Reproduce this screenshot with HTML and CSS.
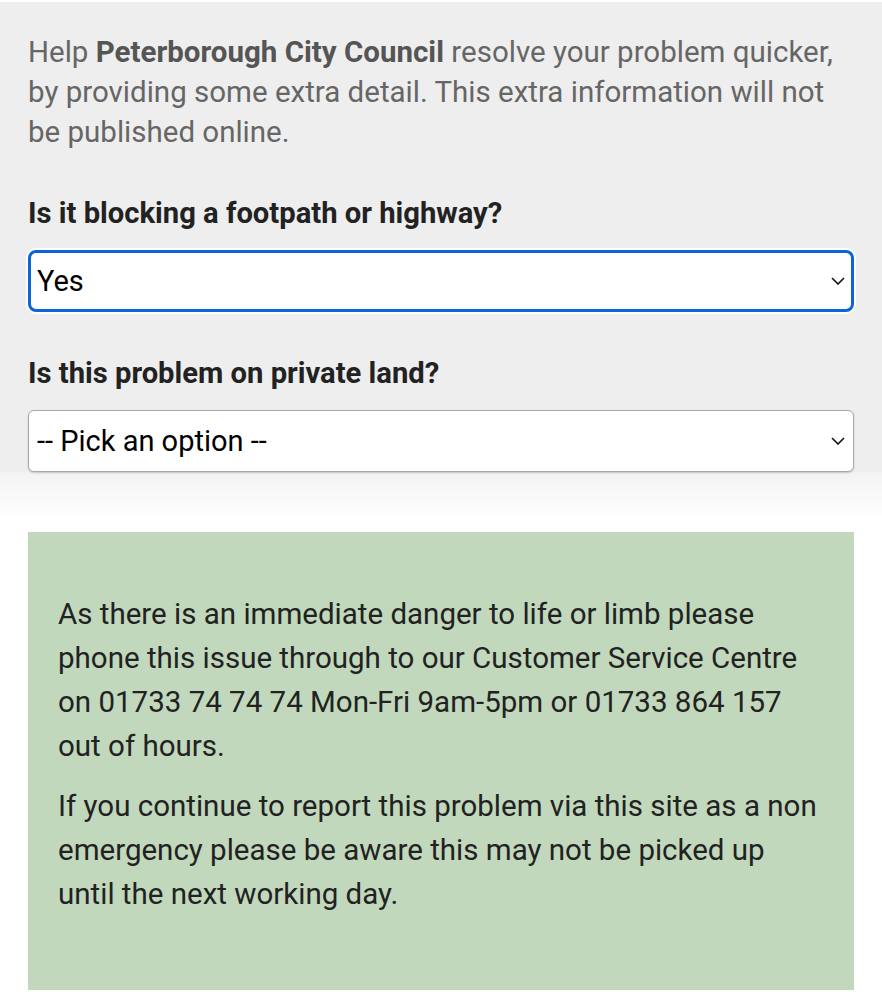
FILE: index.html
```html
<!DOCTYPE html>
<html lang="en">
<head>
  <meta charset="UTF-8">
  <meta name="viewport" content="width=device-width, initial-scale=1.0">
  <title>Extra details</title>
  <link rel="stylesheet" href="styles.css">
</head>
<body>
  <div class="extra">
    <p class="intro">Help <strong>Peterborough City Council</strong> resolve your problem quicker, by providing some extra detail. This extra information will not be published online.</p>

    <label class="question" for="blocking">Is it blocking a footpath or highway?</label>
    <div class="select-wrap">
      <select id="blocking" class="focused">
        <option>Yes</option>
        <option>No</option>
      </select>
      <svg class="chevron" viewBox="0 0 14 8"><path d="M1 1l6 6 6-6" fill="none" stroke="#111" stroke-width="1.6"/></svg>
    </div>

    <label class="question" for="private">Is this problem on private land?</label>
    <div class="select-wrap">
      <select id="private">
        <option>-- Pick an option --</option>
        <option>Yes</option>
        <option>No</option>
      </select>
      <svg class="chevron" viewBox="0 0 14 8"><path d="M1 1l6 6 6-6" fill="none" stroke="#111" stroke-width="1.6"/></svg>
    </div>
  </div>

  <div class="fade"></div>

  <div class="notice">
    <p>As there is an immediate danger to life or limb please phone this issue through to our Customer Service Centre on 01733 74 74 74 Mon-Fri 9am-5pm or 01733 864 157 out of hours.</p>
    <p>If you continue to report this problem via this site as a non emergency please be aware this may not be picked up until the next working day.</p>
  </div>
</body>
</html>
```

FILE: styles.css
```css
* {
  margin: 0;
  padding: 0;
  box-sizing: border-box;
}

body {
  font-family: Roboto, 'Liberation Sans', sans-serif;
  background: #fff;
  color: #222;
}

.extra {
  margin-top: 2px;
  background: #eeeeee;
  padding: 30px 28px 0;
}

.intro {
  font-size: 29.5px;
  line-height: 40px;
  color: #666;
}

.intro strong {
  color: #555;
}

.question {
  display: block;
  font-size: 29.2px;
  font-weight: bold;
  line-height: 36px;
  color: #222;
  margin-top: 43px;
  margin-bottom: 19px;
}

.select-wrap {
  position: relative;
}

select {
  display: block;
  width: 100%;
  height: 62px;
  appearance: none;
  -webkit-appearance: none;
  font-family: Roboto, 'Liberation Sans', sans-serif;
  font-size: 29px;
  color: #000;
  background: #fff;
  border: 1px solid #aaa;
  border-radius: 6px;
  padding: 0 8px;
  box-shadow: 0 1px 2px rgba(0, 0, 0, 0.2);
  outline: none;
}

select.focused {
  border: 3px solid #0b66d4;
  border-radius: 8px;
  padding: 0 6px;
  box-shadow: 0 0 0 2px #fff;
}

.chevron {
  position: absolute;
  right: 9px;
  top: 27px;
  width: 14px;
  height: 8px;
  pointer-events: none;
}

.fade {
  height: 60px;
  background: linear-gradient(#f3f3f3, #fff 80%);
}

.notice {
  margin: 0 28px;
  height: 458px;
  background: #c1d8bc;
  padding: 60px 30px 0;
}

.notice p {
  font-size: 29.5px;
  line-height: 44px;
  color: #222;
  margin-bottom: 16px;
}
```
